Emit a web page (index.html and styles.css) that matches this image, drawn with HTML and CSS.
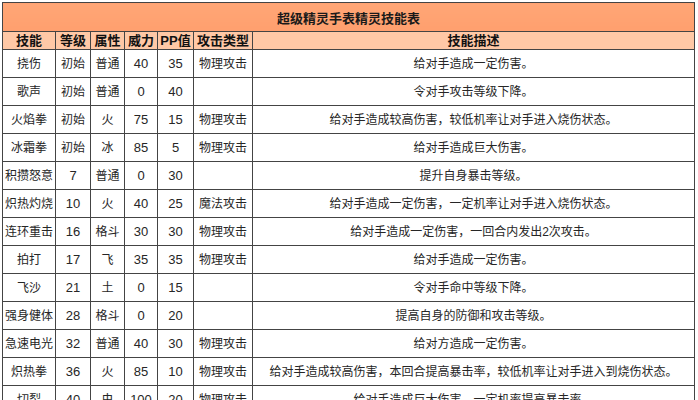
FILE: index.html
```html
<!DOCTYPE html>
<html lang="zh-CN">
<head>
<meta charset="utf-8">
<title>超级精灵手表精灵技能表</title>
<link rel="stylesheet" href="styles.css">
</head>
<body>
<table class="skills">
  <colgroup>
    <col class="c1"><col class="c2"><col class="c3"><col class="c4"><col class="c5"><col class="c6"><col class="c7">
  </colgroup>
  <thead>
    <tr class="title-row"><th colspan="7">超级精灵手表精灵技能表</th></tr>
    <tr class="head-row"><th>技能</th><th>等级</th><th>属性</th><th>威力</th><th>PP值</th><th>攻击类型</th><th>技能描述</th></tr>
  </thead>
  <tbody>
    <tr><td>挠伤</td><td>初始</td><td>普通</td><td class="n">40</td><td class="n">35</td><td>物理攻击</td><td>给对手造成一定伤害。</td></tr>
    <tr><td>歌声</td><td>初始</td><td>普通</td><td class="n">0</td><td class="n">40</td><td></td><td>令对手攻击等级下降。</td></tr>
    <tr><td>火焰拳</td><td>初始</td><td>火</td><td class="n">75</td><td class="n">15</td><td>物理攻击</td><td>给对手造成较高伤害，较低机率让对手进入烧伤状态。</td></tr>
    <tr><td>冰霜拳</td><td>初始</td><td>冰</td><td class="n">85</td><td class="n">5</td><td>物理攻击</td><td>给对手造成巨大伤害。</td></tr>
    <tr><td>积攒怒意</td><td class="n">7</td><td>普通</td><td class="n">0</td><td class="n">30</td><td></td><td>提升自身暴击等级。</td></tr>
    <tr><td>炽热灼烧</td><td class="n">10</td><td>火</td><td class="n">40</td><td class="n">25</td><td>魔法攻击</td><td>给对手造成一定伤害，一定机率让对手进入烧伤状态。</td></tr>
    <tr><td>连环重击</td><td class="n">16</td><td>格斗</td><td class="n">30</td><td class="n">30</td><td>物理攻击</td><td>给对手造成一定伤害，一回合内发出2次攻击。</td></tr>
    <tr><td>拍打</td><td class="n">17</td><td>飞</td><td class="n">35</td><td class="n">35</td><td>物理攻击</td><td>给对手造成一定伤害。</td></tr>
    <tr><td>飞沙</td><td class="n">21</td><td>土</td><td class="n">0</td><td class="n">15</td><td></td><td>令对手命中等级下降。</td></tr>
    <tr><td>强身健体</td><td class="n">28</td><td>格斗</td><td class="n">0</td><td class="n">20</td><td></td><td>提高自身的防御和攻击等级。</td></tr>
    <tr><td>急速电光</td><td class="n">32</td><td>普通</td><td class="n">40</td><td class="n">30</td><td>物理攻击</td><td>给对方造成一定伤害。</td></tr>
    <tr><td>炽热拳</td><td class="n">36</td><td>火</td><td class="n">85</td><td class="n">10</td><td>物理攻击</td><td>给对手造成较高伤害，本回合提高暴击率，较低机率让对手进入到烧伤状态。</td></tr>
    <tr><td>切裂</td><td class="n">40</td><td>虫</td><td class="n">100</td><td class="n">20</td><td>物理攻击</td><td>给对手造成巨大伤害，一定机率提高暴击率。</td></tr>
  </tbody>
</table>
</body>
</html>
```

FILE: styles.css
```css
html, body {
  margin: 0;
  padding: 0;
  background: #ffffff;
}
body {
  padding: 2px 0 0 2px;
  font-family: "Liberation Sans", "Noto Sans CJK SC", sans-serif;
  color: #262626;
}
.skills {
  border-collapse: collapse;
  table-layout: fixed;
  width: 692px;
  border: 1.5px solid #333;
}
.c1 { width: 53px; }
.c2 { width: 35px; }
.c3 { width: 34px; }
.c4 { width: 33px; }
.c5 { width: 36px; }
.c6 { width: 59px; }
.c7 { width: 442px; }
.skills th, .skills td {
  border: 1px solid #444;
  padding: 0;
  text-align: center;
  vertical-align: middle;
  white-space: nowrap;
  overflow: hidden;
}
.title-row th {
  height: 28px;
  background: linear-gradient(#ffa676, #ff9f6e);
  font-size: 13px;
  font-weight: bold;
  color: #1a1a1a;
}
.head-row th {
  height: 17px;
  background: #ffc8a6;
  font-size: 13px;
  font-weight: bold;
  color: #111;
  line-height: 17px;
}
.skills td {
  height: 27px;
  font-size: 12px;
  line-height: 14px;
}
.skills td.n {
  font-size: 13px;
}
```
